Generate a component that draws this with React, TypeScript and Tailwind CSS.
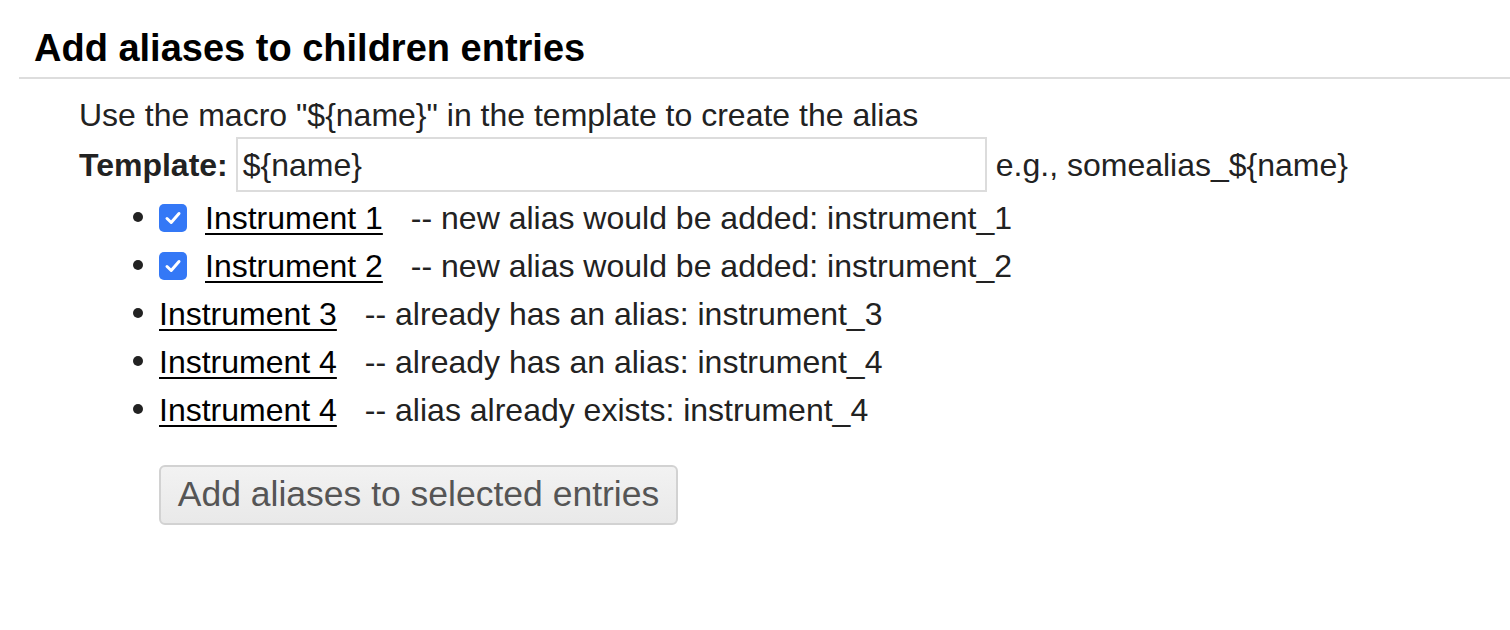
import React from "react";

const Check = () => (
  <span className="inline-flex h-[28px] w-[28px] items-center justify-center rounded-[5px] bg-[#3478f6]">
    <svg width="20" height="20" viewBox="0 0 20 20" fill="none">
      <path d="M4 10.5 L8.2 14.5 L16 5.5" stroke="white" strokeWidth="3" strokeLinecap="round" strokeLinejoin="round" />
    </svg>
  </span>
);

const items = [
  { checked: true, name: "Instrument 1", note: "-- new alias would be added: instrument_1" },
  { checked: true, name: "Instrument 2", note: "-- new alias would be added: instrument_2" },
  { checked: false, name: "Instrument 3", note: "-- already has an alias: instrument_3" },
  { checked: false, name: "Instrument 4", note: "-- already has an alias: instrument_4" },
  { checked: false, name: "Instrument 4", note: "-- alias already exists: instrument_4" },
];

export default function App() {
  return (
    <div className="h-[630px] w-[1510px] bg-white text-[#222] font-['Liberation_Sans',Arial,sans-serif] text-[32px]">
      <div className="ml-[19px] border-b-2 border-[#dddddd] pl-[15px] pt-[25px] pb-[6px]">
        <h3 className="text-[38px] font-bold leading-[46px] text-black">Add aliases to children entries</h3>
      </div>
      <div className="pl-[79px]">
        <div className="mt-[10px] h-[48px] pt-[2px] leading-[48px]">Use the macro "${"{"}name{"}"}" in the template to create the alias</div>
        <div className="flex h-[55px] items-center">
          <span className="font-bold">Template:</span>
          <div className="ml-[8px] flex h-[55px] w-[751px] items-center border-2 border-[#dcdcdc] pl-[5px]">
            {"${name}"}
          </div>
          <span className="ml-[9px]">e.g., somealias_{"${name}"}</span>
        </div>
        <ul className="mt-[-1px] list-disc pl-[80px]">
          {items.map((it, i) => (
            <li key={i} className="h-[48px] leading-[48px]">
              <span className="inline-flex items-center align-middle">
                {it.checked && <span className="mr-[18px] inline-flex"><Check /></span>}
                <a className="text-black underline decoration-[2px] underline-offset-[4px]">{it.name}</a>
                <span className="ml-[28px]">{it.note}</span>
              </span>
            </li>
          ))}
        </ul>
        <div className="mt-[34px] pl-[80px]">
          <button className="h-[60px] w-[519px] rounded-[6px] border-2 border-[#d2d2d2] bg-gradient-to-b from-[#f2f2f2] to-[#e9e9e9] text-[35.5px] text-[#555]">
            Add aliases to selected entries
          </button>
        </div>
      </div>
    </div>
  );
}
